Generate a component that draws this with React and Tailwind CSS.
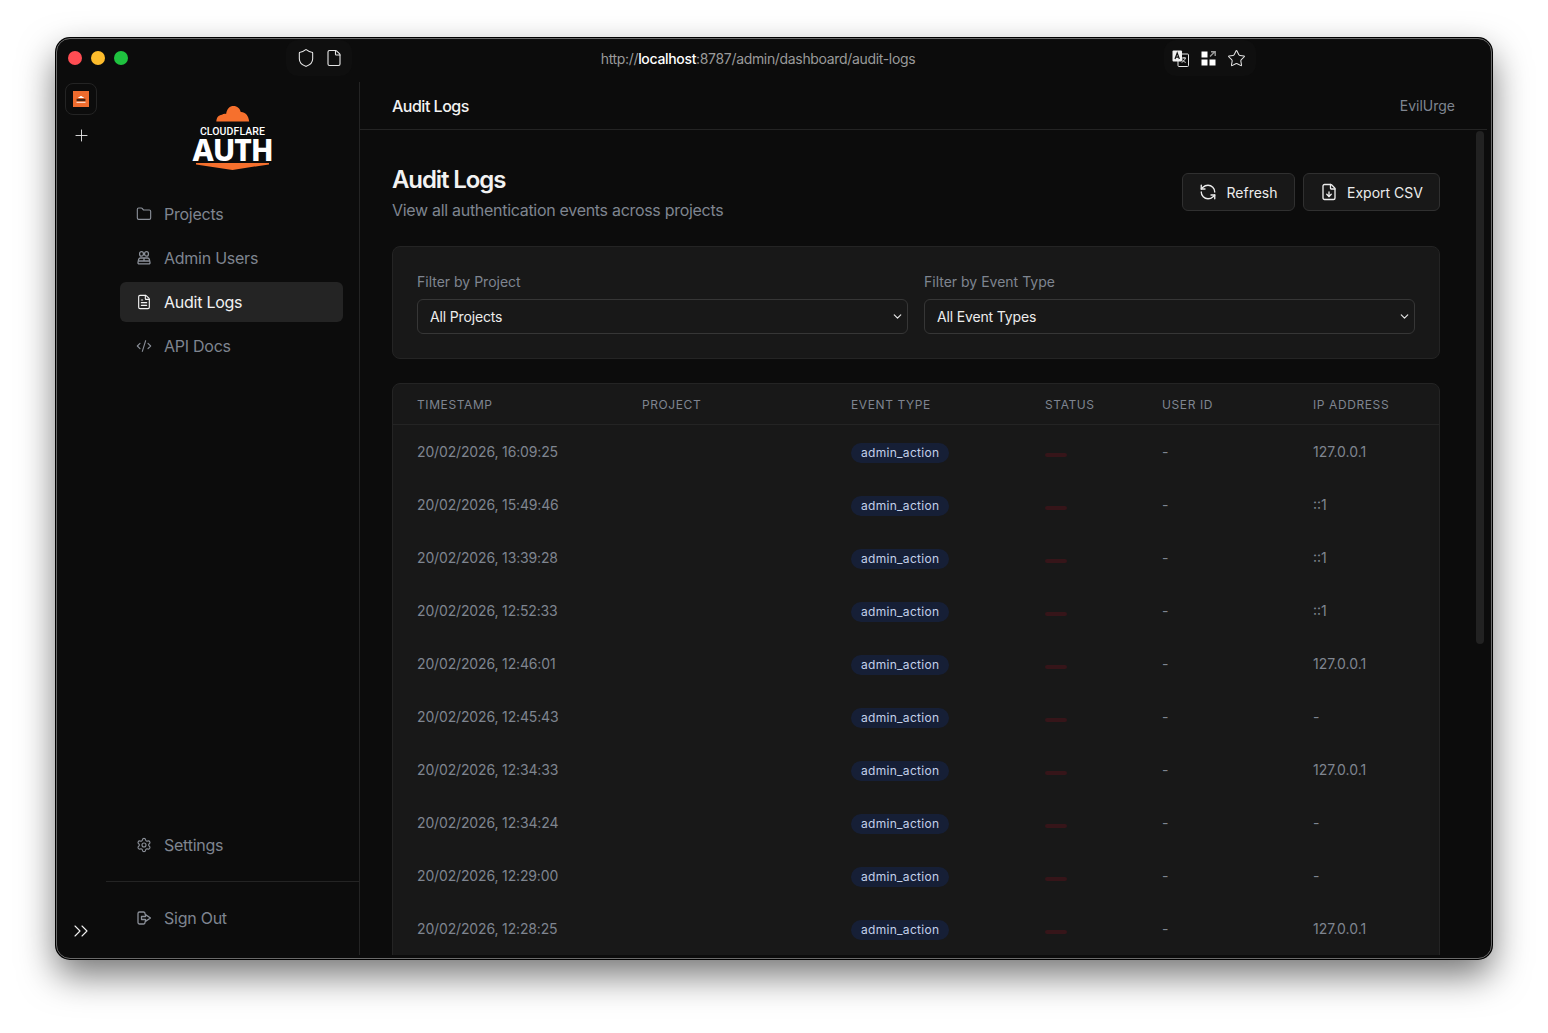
import { Folder, FileText, CodeXml, Settings, Plus, ChevronsRight, ChevronDown, RefreshCcw, FileDown, Star, Shield, File } from 'lucide-react'

const ROWS = [
  { time: '20/02/2026, 16:09:25', ip: '127.0.0.1' },
  { time: '20/02/2026, 15:49:46', ip: '::1' },
  { time: '20/02/2026, 13:39:28', ip: '::1' },
  { time: '20/02/2026, 12:52:33', ip: '::1' },
  { time: '20/02/2026, 12:46:01', ip: '127.0.0.1' },
  { time: '20/02/2026, 12:45:43', ip: '-' },
  { time: '20/02/2026, 12:34:33', ip: '127.0.0.1' },
  { time: '20/02/2026, 12:34:24', ip: '-' },
  { time: '20/02/2026, 12:29:00', ip: '-' },
  { time: '20/02/2026, 12:28:25', ip: '127.0.0.1' },
]

function AdminIcon({ className }) {
  return (
    <svg className={className} viewBox="0 0 16 16" fill="none" stroke="currentColor" strokeWidth="1.3" strokeLinejoin="round">
      <rect x="3.600" y="1.600" width="3.800" height="4.600" rx="1.900" />
      <rect x="8.600" y="1.600" width="3.800" height="4.600" rx="1.900" />
      <path d="M4.500 8h7a2 2 0 0 1 1.900 1.500l.6 3.200a1 1 0 0 1-1 1.100H3a1 1 0 0 1-1-1.100l.6-3.200A2 2 0 0 1 4.500 8z" />
      <path d="M2.500 11h11M8 8v3" />
    </svg>
  )
}

function SignOutIcon({ className }) {
  return (
    <svg className={className} viewBox="0 0 16 16" fill="none" stroke="currentColor" strokeWidth="1.3" strokeLinecap="round" strokeLinejoin="round">
      <path d="M9 4V3.500A1.500 1.500 0 0 0 7.500 2h-4A1.500 1.500 0 0 0 2 3.500v9A1.500 1.500 0 0 0 3.500 14h4A1.500 1.500 0 0 0 9 12.500V12" />
      <path d="M5.500 6.500h4V4.600L14.500 8l-5 3.400V9.500h-4z" />
    </svg>
  )
}

function TranslateIcon() {
  return (
    <svg className="w-[17px] h-[17px]" viewBox="0 0 17 17">
      <rect x="6" y="4" width="10.500" height="12.500" rx="1" fill="#0c0c0c" stroke="#e5e5e5" strokeWidth="1" />
      <path d="M9.500 8h4.500M12 7v1M13.300 8c-.4 2-1.800 3.500-3.600 4.300M10.300 9.500c.6 1.200 1.800 2.300 3.400 2.900" stroke="#e5e5e5" strokeWidth="1" fill="none" />
      <rect x="0.500" y="0.500" width="9.500" height="11" rx="1" fill="#f1f1f1" />
      <path d="M3 9l2.200-6 2.200 6M3.800 7.200h2.800" stroke="#111" strokeWidth="1.200" fill="none" />
    </svg>
  )
}

function GridIcon() {
  return (
    <svg className="w-[15px] h-[15px]" viewBox="0 0 15 15" fill="#fff">
      <rect x="0.500" y="0.500" width="6" height="6" />
      <rect x="0.500" y="8.500" width="6" height="6" />
      <rect x="8.500" y="8.500" width="6" height="6" />
      <path d="M9 5.500l4.500-4.500M10 .7h4.200v4.200" stroke="#9a9a9a" strokeWidth="1.400" fill="none" />
    </svg>
  )
}

function Favicon() {
  return (
    <svg className="w-4 h-4" viewBox="0 0 16 16">
      <rect width="16" height="16" fill="#ef6c2e" />
      <path d="M5.200 7c0-.7.5-1.100 1.200-1 .3-.7.9-1.100 1.600-1.100s1.300.4 1.600 1.100c.7-.1 1.200.3 1.200 1z" fill="#fff" />
      <rect x="3.600" y="7.800" width="8.800" height="2.400" fill="#4a2410" />
      <rect x="3.500" y="10.800" width="9" height="0.900" fill="#fff" />
    </svg>
  )
}

function Logo() {
  return (
    <div className="flex flex-col items-center h-[65px] text-white">
      <svg className="w-[36px] h-[18px]" viewBox="0 0 36 18">
        <path d="M0 18c0-4 2.200-7 6-7.300C7.500 9.500 9 9.300 10.500 9.700 11.500 3.800 14.500 1 18.500 1c4.200 0 7 2.800 7.900 6.500 4.500-.3 8.600 3.500 9.100 10.500z" fill="#f6702d" />
      </svg>
      <div className="text-[10.500px] leading-[10px] font-medium mt-[5px] tracking-[0.1px] font-['Roboto',sans-serif]">CLOUDFLARE</div>
      <div className="text-[30px] leading-[22px] font-extrabold mt-[2px] tracking-[-1.100px] font-['Noto_Sans',sans-serif]">AUTH</div>
      <svg className="w-[79px] h-[8px] mt-[2px]" viewBox="0 0 79 8">
        <path d="M0 0h79v1.500L39.500 7.500 0 1.500z" fill="#f6702d" />
      </svg>
    </div>
  )
}

function NavItem({ icon: Icon, label, active }) {
  return (
    <a className={`h-10 flex items-center rounded-md px-4 text-base tracking-[-0.25px] ${active ? 'bg-[#242424] text-[#f2f2f2]' : 'text-[#7f8590]'}`}>
      <Icon className={`w-4 h-4 mr-3 shrink-0 ${active ? 'text-[#f2f2f2]' : 'text-[#8a8f98]'}`} strokeWidth={1.7} />
      {label}
    </a>
  )
}

function Filter({ label, value }) {
  return (
    <div className="flex-1">
      <label className="block text-sm leading-5 text-[#7f8590] mb-[7px]">{label}</label>
      <div className="relative">
        <select defaultValue={value} className="w-full h-[35px] appearance-none rounded-md border border-[#363636] bg-[#181818] px-3 text-sm tracking-[-0.15px] text-[#ececec] outline-none">
          <option>{value}</option>
        </select>
        <ChevronDown className="absolute right-[4px] top-[11px] w-[13px] h-[13px] text-[#e5e5e5]" strokeWidth={2.2} />
      </div>
    </div>
  )
}

export default function App() {
  return (
    <div className="h-[1033px] overflow-hidden bg-white pl-[56px] pt-[38px] font-['Inter',sans-serif]">
      <div className="w-[1436px] h-[921px] rounded-[14px] border border-[#6a6a6a] bg-[#0c0c0c] overflow-hidden shadow-[0_0_0_1px_#000,0_16px_36px_rgba(0,0,0,0.55)] flex flex-col">
        {/* Browser title bar */}
        <div className="h-[43px] shrink-0 flex items-center pl-[11px] pb-[3px] text-[#e5e5e5]">
          <div className="flex gap-[9px] w-[218px] mb-[2px]">
            <span className="w-3.5 h-3.5 rounded-full bg-[#ff4d53]"></span>
            <span className="w-3.5 h-3.5 rounded-full bg-[#fdbc2c]"></span>
            <span className="w-3.5 h-3.5 rounded-full bg-[#1fc23f]"></span>
          </div>
          <div className="w-[66px] h-9 mb-[2px] rounded-xl bg-[#0f0f0f] flex items-center justify-center gap-[9px]">
            <Shield className="w-5 h-5" strokeWidth={1.3} />
            <File className="w-[18px] h-[18px]" strokeWidth={1.5} />
          </div>
          <div className="w-[812px] text-center text-sm text-[#9a9a9a] tracking-[-0.33px]">
            http://<span className="text-white font-medium">localhost</span>:8787/admin/dashboard/audit-logs
          </div>
          <div className="w-[92px] h-9 mb-[2px] rounded-xl bg-[#0f0f0f] flex items-center pl-2 gap-[11.500px]">
            <TranslateIcon />
            <GridIcon />
            <Star className="w-[19px] h-[19px]" strokeWidth={1.3} />
          </div>
        </div>

        <div className="flex-1 flex min-h-0 pr-1 pb-[3px]">
          {/* Browser side rail */}
          <div className="w-[49px] shrink-0 flex flex-col items-center pr-[1px] text-[#f0f0f0]">
            <div className="w-8 h-8 mt-[1px] rounded-lg border border-[#242424] flex items-center justify-center">
              <Favicon />
            </div>
            <Plus className="w-[19px] h-[19px] mt-[11px]" strokeWidth={1.100} />
            <ChevronsRight className="w-6 h-6 mt-auto mb-[12px]" strokeWidth={1.100} />
          </div>

          {/* App sidebar */}
          <aside className="w-[254px] shrink-0 border-r border-[#242424] flex flex-col">
            <div className="pt-[23px] pb-[24px]">
              <Logo />
            </div>
            <nav className="pl-[14px] pr-[16px] flex flex-col gap-1">
              <NavItem icon={Folder} label="Projects" />
              <NavItem icon={AdminIcon} label="Admin Users" />
              <NavItem icon={FileText} label="Audit Logs" active />
              <NavItem icon={CodeXml} label="API Docs" />
            </nav>
            <div className="mt-auto pl-[14px] pr-[16px] pb-[16px]">
              <NavItem icon={Settings} label="Settings" />
            </div>
            <div className="border-t border-[#242424] pl-[14px] pr-[16px] pt-[16px] pb-[17px]">
              <NavItem icon={SignOutIcon} label="Sign Out" />
            </div>
          </aside>

          {/* Main */}
          <main className="flex-1 min-w-0 flex flex-col">
            <header className="h-12 shrink-0 border-b border-[#242424] flex items-center justify-between px-8">
              <span className="text-base font-medium text-[#f2f2f2] tracking-[-0.5px]">Audit Logs</span>
              <span className="text-sm text-[#7f8590]">EvilUrge</span>
            </header>
            <div className="flex-1 min-h-0 flex">
              <div className="flex-1 min-w-0 overflow-hidden px-8 pt-[33px]">
                <div className="flex items-start justify-between mb-6">
                  <div>
                    <h1 className="text-2xl leading-8 font-semibold mt-[1px] text-[#f2f2f2] tracking-[-1.100px]">Audit Logs</h1>
                    <p className="text-base leading-6 text-[#7f8590] mt-[2px] tracking-[-0.3px]">View all authentication events across projects</p>
                  </div>
                  <div className="flex gap-2 mt-[10px]">
                    <button className="h-[38px] w-[113px] flex items-center justify-center gap-[9px] rounded-md border border-[#303030] bg-[#181818] text-sm text-[#ececec]">
                      <RefreshCcw className="w-[18px] h-[18px]" strokeWidth={1.8} />
                      <span className="mt-[1px]">Refresh</span>
                    </button>
                    <button className="h-[38px] w-[137px] flex items-center justify-center gap-[9px] rounded-md border border-[#303030] bg-[#181818] text-sm text-[#ececec]">
                      <FileDown className="w-[18px] h-[18px]" strokeWidth={1.8} />
                      <span className="mt-[1px]">Export CSV</span>
                    </button>
                  </div>
                </div>

                <div className="rounded-lg border border-[#242424] bg-[#181818] px-6 pt-[25px] pb-6 flex gap-4 mb-6">
                  <Filter label="Filter by Project" value="All Projects" />
                  <Filter label="Filter by Event Type" value="All Event Types" />
                </div>

                <div className="h-[620px] rounded-lg border border-[#242424] bg-[#181818]">
                  <table className="w-full table-fixed text-sm text-left">
                    <thead>
                      <tr className="h-[40px] border-b border-[#242424] text-xs tracking-[0.6px] text-[#7f8590]">
                        <th className="w-[225px] pl-6 pt-[2px] font-normal">TIMESTAMP</th>
                        <th className="w-[209px] pl-6 pt-[2px] font-normal">PROJECT</th>
                        <th className="w-[194px] pl-6 pt-[2px] font-normal">EVENT TYPE</th>
                        <th className="w-[117px] pl-6 pt-[2px] font-normal">STATUS</th>
                        <th className="w-[151px] pl-6 pt-[2px] font-normal">USER ID</th>
                        <th className="pl-6 pt-[2px] font-normal">IP ADDRESS</th>
                      </tr>
                    </thead>
                    <tbody>
                      {ROWS.map(row => (
                        <tr key={row.time} className="h-[53px] text-[#7f8590]">
                          <td className="pl-6 pt-[3px] tracking-[-0.15px]">{row.time}</td>
                          <td className="pl-6"></td>
                          <td className="pl-6 pt-[3px]">
                            <span className="inline-block rounded-full bg-[#161f36] px-[10px] py-[2px] text-xs leading-4 tracking-[0.3px] text-[#c3d0ea]">admin_action</span>
                          </td>
                          <td className="pl-6">
                            <span className="block w-[22px] h-1 mt-[9px] rounded-full bg-[#361519]"></span>
                          </td>
                          <td className="pl-6 pt-[3px]">-</td>
                          <td className="pl-6 pt-[3px]">{row.ip}</td>
                        </tr>
                      ))}
                    </tbody>
                  </table>
                </div>
              </div>

              {/* Scrollbar */}
              <div className="w-[15px] shrink-0 pl-1 pr-[3px] pt-[1px]">
                <div className="h-[513px] rounded-full bg-[#222222]"></div>
              </div>
            </div>
          </main>
        </div>
      </div>
    </div>
  )
}
